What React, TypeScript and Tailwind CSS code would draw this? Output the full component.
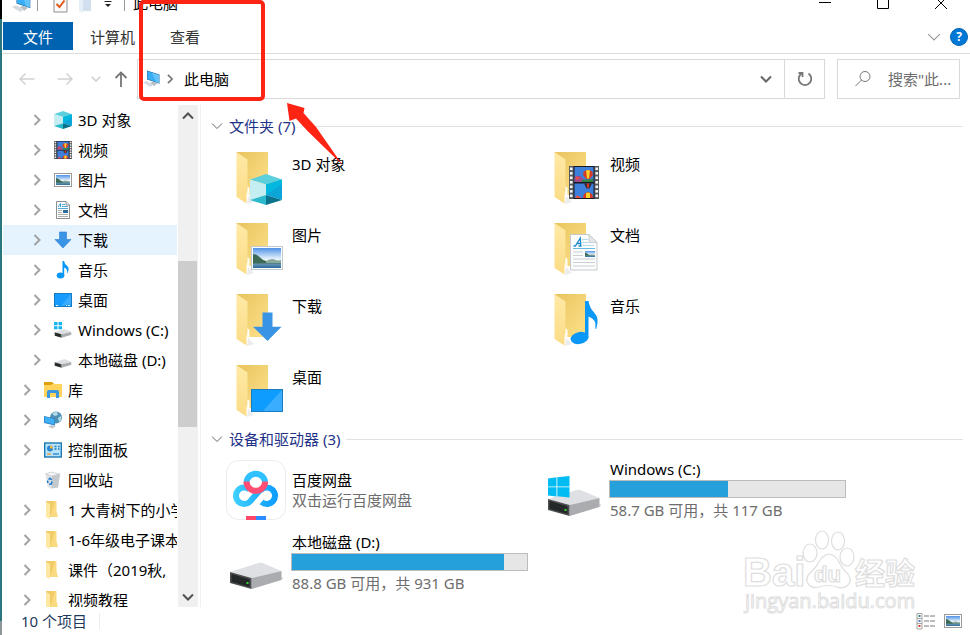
import type { ReactNode } from "react";

/* ---------- small icons (18px) ---------- */

function Scenery({ x, y, w, h }: { x: number; y: number; w: number; h: number }) {
  return (
    <svg x={x} y={y} width={w} height={h} viewBox="0 0 30 20" preserveAspectRatio="none">
      <defs>
        <linearGradient id="sky" x1="0" y1="0" x2="0" y2="1">
          <stop offset="0" stopColor="#4f93e6" />
          <stop offset="0.55" stopColor="#e8f3fc" />
        </linearGradient>
        <linearGradient id="lake" x1="0" y1="0" x2="0" y2="1">
          <stop offset="0" stopColor="#7fa9c6" />
          <stop offset="1" stopColor="#2f6a97" />
        </linearGradient>
      </defs>
      <rect width="30" height="20" fill="url(#sky)" />
      <rect y="14" width="30" height="6" fill="url(#lake)" />
      <path d="M0 6q4 0 7 3t7 4t16 1.500v1H0z" fill="#3d6b57" />
      <path d="M14 13q6-3 9-1.500t7 .5v3H14z" fill="#8aa79b" />
    </svg>
  );
}

function Balloons({ x, y, w, h }: { x: number; y: number; w: number; h: number }) {
  return (
    <svg x={x} y={y} width={w} height={h} viewBox="0 0 30 33" preserveAspectRatio="none">
      <rect width="30" height="33" fill="#55585c" />
      {[1.5, 6, 10.5, 15, 19.5, 24, 28.5].map((v) => (
        <g key={v} fill="#f3f3f3">
          <rect x="1" y={v} width="2.600" height="2.600" />
          <rect x="26.400" y={v} width="2.600" height="2.600" />
        </g>
      ))}
      <rect x="4.600" width="20.800" height="33" fill="#16191d" />
      <rect x="5.500" y="1" width="19" height="15" fill="#3f7fdc" />
      <rect x="5.500" y="17.500" width="19" height="14.500" fill="#3f7fdc" />
      <path d="M5.500 12q4-5 9 1v3h-9z" fill="#a04a8c" />
      <path d="M6 10l5 2-3 2z" fill="#ef4d3f" />
      <path d="M13 14l11-1v3H13z" fill="#31833d" />
      <path d="M14 8.500a5 4.500 0 0 1 10 0q-1 2-3.500 4.500h-3q-2.500-2.500-3.500-4.500z" fill="#d93a25" />
      <path d="M17 4.500q2-1 4 0l-1 8h-2z" fill="#f8d22c" />
      <path d="M15 17.500h8l-2.500 5h-3z" fill="#3a2b35" />
      <path d="M18 17.500h2v4h-2z" fill="#d93a25" />
      <path d="M14 32q0-5 5-6q5 1 5 6z" fill="#d93a25" />
      <path d="M17 27q2-1 4 0v5h-4z" fill="#f8d22c" />
      <path d="M6 32q2-5 6 0z" fill="#ef4d3f" />
    </svg>
  );
}

function Cube({ x, y, w, h }: { x: number; y: number; w: number; h: number }) {
  return (
    <svg x={x} y={y} width={w} height={h} viewBox="0 0 32 31" preserveAspectRatio="none">
      <path d="M0 5.500L16 0l16 5.500L16 10.500z" fill="#5ccfdc" />
      <path d="M0 5.500l16 5v10.500L0 26z" fill="#c4eef1" />
      <path d="M32 5.500l-16 5v10.500l16 5z" fill="#0ba5d8" />
      <path d="M16 10.500l16-5v5L16 21z" fill="#04b7df" />
      <path d="M0 26l16-5v10z" fill="#2cb9cb" />
      <path d="M32 26l-16-5v10z" fill="#07738c" />
    </svg>
  );
}

function DiskBody() {
  return (
    <>
      <path d="M25 56l32-10v-2L27 52z" fill="#dedede" />
      <path d="M4 39l28.500-9q2-.5 4 0L55.500 38 25.500 45z" fill="#dfe0e3" />
      <path d="M55.500 38L25.500 45v11l30-9z" fill="#aaacaf" />
      <path d="M4 39l21.500 6v11L4 50z" fill="#4b4d4e" />
      <path d="M5.500 41l18 5.200v7.800l-18-5.200z" fill="#252828" />
      <rect x="20.500" y="49" width="2" height="2" fill="#34d52e" />
    </>
  );
}

function WinLogo() {
  return (
    <g fill="#00bcf2">
      <path d="M4 18.500l8.500-1.200v9.200H4z" />
      <path d="M13.300 17.200L25.500 16v10.500H13.300z" />
      <path d="M4 27.300h8.500v9.200L4 35.500z" />
      <path d="M13.300 27.300h12.200V37.500l-12.200-1.200z" />
    </g>
  );
}

function Glyph({ children, size = "size-[18px]" }: { children: ReactNode; size?: string }) {
  return (
    <svg className={`${size} shrink-0`} viewBox="0 0 18 18" aria-hidden="true">
      {children}
    </svg>
  );
}

const PcIcon = ({ size }: { size?: string }) => (
  <Glyph size={size}>
    <path d="M4 .5l12.500 4v9.300L4 9.500z" fill="#2b6fa0" />
    <path d="M4.500 1.200l11.500 3.800v8L4.500 9z" fill="#3aaef5" />
    <path d="M9 2.700l7 2.300v8l-3-1z" fill="#63c3fa" />
    <path d="M6.500 13.500l3-2 5 1.800-3.500 2.700z" fill="#b7bec4" />
    <path d="M0 12.500l3.500-1.500 7 3.500L7.500 17z" fill="#d4dae0" />
  </Glyph>
);
const CubeIcon = () => (
  <Glyph>
    <Cube x={0} y={0} w={18} h={18} />
  </Glyph>
);
const VideoIcon = () => (
  <Glyph>
    <Balloons x={0} y={0} w={18} h={18} />
  </Glyph>
);
const PictureIcon = () => (
  <Glyph>
    <rect x=".5" y="2.500" width="17" height="13" fill="#fff" stroke="#9a9a9a" />
    <Scenery x={2} y={4} w={14} h={10} />
  </Glyph>
);
const DocIcon = () => (
  <Glyph>
    <path d="M2.500.5h9.500l3.500 3.500v13.500h-13z" fill="#fff" stroke="#8b8f92" />
    <path d="M12 .5v3.500h3.500" fill="#eee" stroke="#8b8f92" />
    <path d="M4 6l2.500-3.500V6" stroke="#2a93d1" strokeWidth=".9" fill="none" />
    <path d="M8 3.500h3M8 5.500h6M4 7.500h10" stroke="#2a93d1" strokeWidth=".8" fill="none" />
    <path d="M4 9.500h4M4 11.500h4M4 13.500h10M4 15.500h10" stroke="#9a9a9a" strokeWidth=".8" />
    <rect x="9" y="9" width="5" height="3" fill="#2c6c9f" />
  </Glyph>
);
const DownIcon = () => (
  <Glyph>
    <path d="M5.500 1h7v7.500H17L9 17 1 8.500h4.500z" fill="#3a95e6" stroke="#2b7cd0" strokeWidth=".6" />
  </Glyph>
);
const MusicIcon = () => (
  <Glyph>
    <ellipse cx="6.500" cy="14.500" rx="3.800" ry="3" fill="#0797f5" />
    <path d="M8.500 0H10q.5 3 3.200 5t.3 7q-.2.700-.6 0q1.200-4-2.700-5.500V15H8.500z" fill="#0797f5" />
  </Glyph>
);
const DesktopIcon = () => (
  <Glyph>
    <rect x=".5" y="2.500" width="17" height="13" fill="#169cfd" stroke="#167cc4" />
    <path d="M17 3v10L7 15z" fill="#3babfd" />
    <path d="M2 14.500h2M12 14.500h1M14 14.500h2" stroke="#e8f6ff" />
  </Glyph>
);
const DriveIcon = ({ windows = false }: { windows?: boolean }) => (
  <svg className="size-[18px] shrink-0" viewBox="2 4 56 56" aria-hidden="true">
    <DiskBody />
    {windows && (
      <g fill="#12b4ee">
        <path d="M2 7h11v10H2zM16 7h11v10H16zM2 20h11v10H2zM16 20h11v10H16z" />
      </g>
    )}
  </svg>
);
const LibraryIcon = () => (
  <Glyph>
    <path d="M0 1h8l2 2h8v13H0z" fill="#ffd35c" />
    <path d="M0 1h8l2 2H8L7 4H0z" fill="#dfa010" />
    <path d="M3 17v-6q0-2 2-2h8q2 0 2 2v6h-3v-5H6v5z" fill="#3d97dc" />
  </Glyph>
);
const NetworkIcon = () => (
  <Glyph>
    <circle cx="12" cy="6.500" r="6" fill="#4e91b5" />
    <path d="M8 3q2-2.500 5-2l1 3-3 1zM14 7l3-2q1 4-2 6z" fill="#b4dbe8" />
    <path d="M0 5l11 2.500v7L0 12z" fill="#2d7fc0" />
    <path d="M.7 5.800l9.600 2.300v5.500L.7 11.300z" fill="#3fb0f8" />
    <path d="M4 15.500l4-1.500 4 1.500-4 2z" fill="#c3c9ce" />
  </Glyph>
);
const ControlIcon = () => (
  <Glyph>
    <rect x=".7" y="2" width="16.600" height="14" fill="#b8e4fb" stroke="#1b78b4" strokeWidth="1.400" />
    <circle cx="6" cy="7.500" r="3" fill="#2787d4" />
    <path d="M6 7.500v-3a3 3 0 0 1 3 3z" fill="#f6b53c" />
    <path d="M10.500 5.500h2M10.500 8h2M14 5.500h1.500M14 8h1.500" stroke="#1b78b4" strokeWidth="1.300" />
    <path d="M3 13h4" stroke="#f0982b" strokeWidth="1.300" />
    <path d="M9 13h6" stroke="#1f7fca" strokeWidth="1.300" />
  </Glyph>
);
const RecycleIcon = () => (
  <Glyph>
    <path d="M1.500 3l5-2 9.500 2-2 13.500-7 1-3.500-2z" fill="#dfe2e5" />
    <path d="M1.500 3l6 2 8.500-2-9-2z" fill="#f4f5f6" stroke="#b6babd" strokeWidth=".5" />
    <path d="M8 5l8-2-2 13.500-6.500 1z" fill="#c3c8cc" />
    <path d="M4.500 8.500l1.500-1.300 1.700 1.800M8 10.500l-.8 2.500-2 .2M3.800 12l-.2-2.500" fill="none" stroke="#1479cf" strokeWidth="1.500" />
  </Glyph>
);
const FolderIcon = () => (
  <Glyph>
    <path d="M2 0h9.500v16H2z" fill="#f0cc67" />
    <path d="M11 0h1.500v10l1.500 6H6z" fill="#fada80" />
    <path d="M2 1l4 2v15l-4-2z" fill="#ffe9a2" />
  </Glyph>
);

/* ---------- large icons (60px) ---------- */

function BigFolder({ children }: { children: ReactNode }) {
  return (
    <svg className="size-[60px] shrink-0" viewBox="0 0 60 60" aria-hidden="true">
      <defs>
        <linearGradient id="back" x1="0" y1="0" x2="1" y2="1">
          <stop offset="0" stopColor="#e8c45e" />
          <stop offset="1" stopColor="#fde18b" />
        </linearGradient>
        <linearGradient id="flap" x1="0" y1="0" x2="0" y2="1">
          <stop offset="0" stopColor="#ffe9a6" />
          <stop offset="1" stopColor="#fbdc86" />
        </linearGradient>
      </defs>
      <path d="M21 56l7-2-6-6z" fill="#ececec" />
      <path d="M10.500 4h31.500v43H21z" fill="url(#back)" />
      <path d="M10.500 4l11 7.500V36l-1 5v14.500L10.500 49z" fill="url(#flap)" />
      <path d="M21.500 38l2 2v8h-2.500z" fill="#fffdf5" />
      {children}
    </svg>
  );
}

const CubeFolder = () => (
  <BigFolder>
    <Cube x={24} y={26} w={32} h={31} />
  </BigFolder>
);
const VideoFolder = () => (
  <BigFolder>
    <Balloons x={25} y={18} w={30} h={33} />
  </BigFolder>
);
const PictureFolder = () => (
  <BigFolder>
    <rect x="25.500" y="27.500" width="31" height="23" fill="#fafcfd" stroke="#c3ccd3" />
    <Scenery x={27} y={29} w={28} h={20} />
  </BigFolder>
);
const DocFolder = () => (
  <BigFolder>
    <path d="M26.500 15.500h18.500l8 8v27.500h-26.500z" fill="#fbfcfc" stroke="#c5c9cb" />
    <path d="M45 15.500v8h8z" fill="#e3e6e8" stroke="#c5c9cb" strokeWidth=".8" />
    <path d="M29.500 27h1.800l5-8 .5 8h-2.300M32.500 24.500h4" fill="none" stroke="#1d8acb" strokeWidth="1.300" />
    <path d="M38 20.500h6M38 23.500h6M38 26.500h12" stroke="#b9dced" />
    <path d="M29 29.500h22" stroke="#6db8df" />
    <path d="M29 33h10M29 36.500h10M29 40h22M29 43.500h22M29 47h22" stroke="#ccd0d3" />
    <Scenery x={41} y={32} w={10} h={6} />
  </BigFolder>
);
const DownFolder = () => (
  <BigFolder>
    <path d="M36.500 22.500h10v14.200h9L41.500 51 27 36.700h9.500z" fill="#3a94e5" />
  </BigFolder>
);
const MusicFolder = () => (
  <BigFolder>
    <ellipse cx="35.500" cy="48" rx="9" ry="6" transform="rotate(-12 35.500 48)" fill="#0b97f6" />
    <path d="M41 11h3.500q1 7 6 12t2 15q-.6 1.500-1.200.5q2-9-6.800-12V48H41z" fill="#0b97f6" />
  </BigFolder>
);
const DesktopFolder = () => (
  <BigFolder>
    <rect x="25.500" y="28.500" width="31" height="22" fill="#0f9cff" stroke="#1a7cc2" />
    <path d="M56 29v21H37z" fill="#3aaefc" />
  </BigFolder>
);

const BigDrive = ({ windows = false }: { windows?: boolean }) => (
  <svg className="size-[60px] shrink-0" viewBox="0 0 60 60" aria-hidden="true">
    <DiskBody />
    {windows && <WinLogo />}
  </svg>
);

const NetdiskLogo = () => (
  <svg className="size-[60px] shrink-0" viewBox="0 0 60 60" aria-hidden="true">
    <defs>
      <linearGradient id="cloud" x1="8" y1="0" x2="52" y2="0" gradientUnits="userSpaceOnUse">
        <stop offset="0" stopColor="#3fd0ff" />
        <stop offset="1" stopColor="#0a9bff" />
      </linearGradient>
    </defs>
    <rect x=".5" y=".5" width="59" height="59" rx="12" fill="#fff" stroke="#ececee" />
    <g fill="none" strokeWidth="6">
      <path d="M34 30L24 41.500a8.200 8.200 0 1 1-.5-12M34.500 30.500a8.200 8.200 0 1 1 1 11.500" stroke="url(#cloud)" />
      <path d="M20.500 23a9.300 9.300 0 0 1 18.600 0" stroke="#2fc0ff" />
      <path d="M20.500 21.500a9.300 9.300 0 0 0 18.600 0" stroke="#ff4d73" />
    </g>
    <path d="M20 56h10v4H20z" fill="#ff4769" />
    <path d="M30 56h10v4H30z" fill="#2a8cff" />
  </svg>
);

/* ---------- line glyphs ---------- */

function Chevron({ dir, className }: { dir: "down" | "right" | "up"; className: string }) {
  const path = { down: "M1 3.500l5 5 5-5", up: "M1 8.500l5-5 5 5", right: "M3.500 1l5 5-5 5" }[dir];
  return (
    <svg className={`shrink-0 ${className}`} viewBox="0 0 12 12" fill="none" stroke="currentColor" aria-hidden="true">
      <path d={path} />
    </svg>
  );
}

/* ---------- data ---------- */

type Node = { label: string; icon: ReactNode; top?: boolean; leaf?: boolean; active?: boolean };

const tree: Node[] = [
  { label: "3D 对象", icon: <CubeIcon /> },
  { label: "视频", icon: <VideoIcon /> },
  { label: "图片", icon: <PictureIcon /> },
  { label: "文档", icon: <DocIcon /> },
  { label: "下载", icon: <DownIcon />, active: true },
  { label: "音乐", icon: <MusicIcon /> },
  { label: "桌面", icon: <DesktopIcon /> },
  { label: "Windows (C:)", icon: <DriveIcon windows /> },
  { label: "本地磁盘 (D:)", icon: <DriveIcon /> },
  { label: "库", icon: <LibraryIcon />, top: true },
  { label: "网络", icon: <NetworkIcon />, top: true },
  { label: "控制面板", icon: <ControlIcon />, top: true },
  { label: "回收站", icon: <RecycleIcon />, top: true, leaf: true },
  { label: "1 大青树下的小学", icon: <FolderIcon />, top: true },
  { label: "1-6年级电子课本", icon: <FolderIcon />, top: true },
  { label: "课件（2019秋,", icon: <FolderIcon />, top: true },
  { label: "视频教程", icon: <FolderIcon />, top: true },
];

const folders = [
  { label: "3D 对象", icon: <CubeFolder /> },
  { label: "视频", icon: <VideoFolder /> },
  { label: "图片", icon: <PictureFolder /> },
  { label: "文档", icon: <DocFolder /> },
  { label: "下载", icon: <DownFolder /> },
  { label: "音乐", icon: <MusicFolder /> },
  { label: "桌面", icon: <DesktopFolder /> },
];

/* ---------- parts ---------- */

function TitleBar() {
  return (
    <header className="overflow-hidden">
      <div className="-mt-3 flex h-[30px] items-center pl-[9px]">
        <PcIcon size="size-5" />
        <span className="ml-[5px] h-4 w-px bg-[#9a9a9a]" />
        <button aria-label="属性" className="ml-[15px]">
          <svg className="h-5 w-[15px]" viewBox="0 0 15 20" fill="none">
            <path d="M1 1h13v18H1z" fill="#fafafa" stroke="#8f8f8f" />
            <path d="M3.500 11l3 3 5-6.500" stroke="#e2591b" strokeWidth="2" />
          </svg>
        </button>
        <button aria-label="新建文件夹" className="ml-[11px]">
          <svg className="h-5 w-3" viewBox="0 0 12 20">
            <path d="M3 1h9v17H3z" fill="#d2dfee" />
            <path d="M0 2l4 2v16l-4-2z" fill="#e6eef7" />
          </svg>
        </button>
        <button aria-label="自定义快速访问工具栏" className="ml-[12px]">
          <svg className="size-2.5" viewBox="0 0 10 10">
            <path d="M1.500 3.500h7" stroke="#222" />
            <path d="M2 6h6L5 9z" fill="#222" />
          </svg>
        </button>
        <span className="ml-[11px] h-4 w-px bg-[#9a9a9a]" />
        <h1 className="ml-2">此电脑</h1>
        <div className="ml-auto flex">
          <button aria-label="最小化" className="flex w-[58px] justify-center">
            <svg className="size-[14px]" viewBox="0 0 14 14" stroke="#000"><path d="M1 6.500h12" /></svg>
          </button>
          <button aria-label="最大化" className="flex w-[58px] justify-center">
            <svg className="size-[14px]" viewBox="0 0 14 14" fill="none" stroke="#000"><path d="M1.500 1.500h11v11h-11z" /></svg>
          </button>
          <button aria-label="关闭" className="flex w-[58px] justify-center">
            <svg className="size-[14px]" viewBox="0 0 14 14" stroke="#000"><path d="M1 1l12 12M13 1L1 13" /></svg>
          </button>
        </div>
      </div>
    </header>
  );
}

function Ribbon() {
  return (
    <nav className="flex items-center border-b border-[#dadbdc] pt-1 pb-[3px] text-[#333]">
      <button className="h-7 w-[70px] bg-[#0063b1] pt-px text-white">文件</button>
      <button className="h-7 w-[79px] pt-px">计算机</button>
      <button className="h-7 w-[66px] pt-px">查看</button>
      <button aria-label="展开功能区" className="ml-auto pt-[2px] text-[#9a9a9a]">
        <Chevron dir="down" className="size-[14px]" />
      </button>
      <button aria-label="帮助" className="mt-[2px] mr-[2px] ml-[9px] size-[18px] rounded-full border border-[#0063b1] bg-[#0078d7] text-xs leading-4 font-bold text-white">
        ?
      </button>
    </nav>
  );
}

function AddressRow() {
  return (
    <div className="flex items-center py-[5px] pr-[10px] pl-4">
      <button aria-label="后退" className="text-[#d2d2d2]">
        <svg className="size-4" viewBox="0 0 16 16" fill="none" stroke="currentColor" strokeWidth="1.500"><path d="M15.500 8H1M6.500 2.500L1 8l5.500 5.500" /></svg>
      </button>
      <button aria-label="前进" className="ml-[22px] text-[#d2d2d2]">
        <svg className="size-4" viewBox="0 0 16 16" fill="none" stroke="currentColor" strokeWidth="1.500"><path d="M.5 8H15M9.500 2.500L15 8l-5.500 5.500" /></svg>
      </button>
      <button aria-label="最近浏览的位置" className="ml-[18px] text-[#d2d2d2]">
        <Chevron dir="down" className="size-[10px] stroke-2" />
      </button>
      <button aria-label="上移" className="mr-2 ml-3 text-[#757575]">
        <svg className="size-4" viewBox="0 0 16 16" fill="none" stroke="currentColor" strokeWidth="1.800"><path d="M8 16V1.500M2.500 7L8 1.500 13.500 7" /></svg>
      </button>
      <div className="flex h-10 min-w-0 flex-1 items-center border border-[#d9d9d9]">
        <span className="ml-[5px] flex"><PcIcon /></span>
        <Chevron dir="right" className="mr-2 ml-1 size-[10px] stroke-2 text-[#777]" />
        <button className="ml-px">此电脑</button>
        <button aria-label="历史记录" className="mr-3 ml-auto text-[#666]">
          <Chevron dir="down" className="size-3 stroke-2" />
        </button>
        <button aria-label="刷新" className="flex h-full w-10 items-center justify-center border-l border-[#d9d9d9] text-[#777]">
          <svg className="size-[18px]" viewBox="0 0 18 18" fill="none" stroke="currentColor" strokeWidth="1.800">
            <path d="M12.500 3.500a6.300 6.300 0 1 1-7 0" />
            <path d="M2.500 3h4v4" />
          </svg>
        </button>
      </div>
      <label className="ml-3 flex h-10 w-[123px] items-center border border-[#d9d9d9]">
        <svg className="ml-4 size-[18px] shrink-0" viewBox="0 0 18 18" fill="none" stroke="#777" aria-label="搜索">
          <circle cx="11" cy="6.500" r="5" />
          <path d="M7.500 10L1.500 16" />
        </svg>
        <input type="text" placeholder={'搜索"此...'} className="ml-4 w-full min-w-0 outline-none placeholder:text-[#6d6d6d]" />
      </label>
    </div>
  );
}

function Sidebar() {
  return (
    <aside className="flex w-[195px] shrink-0">
      <ul className="min-w-0 flex-1 overflow-hidden">
        {tree.map((n) => (
          <li key={n.label} className={n.active ? "mr-px bg-[#e5f3ff]" : "mr-px"}>
            <button className={`flex h-[30px] w-full items-center overflow-hidden whitespace-nowrap ${n.top ? "pl-[18px]" : "pl-7"}`}>
              <Chevron dir="right" className={n.leaf ? "invisible size-3" : "size-3 stroke-2 text-[#a2a2a2]"} />
              <span className="mr-[6px] ml-[11px] flex shrink-0">{n.icon}</span>
              {n.label}
            </button>
          </li>
        ))}
      </ul>
      <div className="flex w-5 flex-col items-center bg-[#f0f0f0]">
        <button aria-label="向上滚动" className="pt-[5px] text-[#505050]">
          <Chevron dir="up" className="size-3 stroke-2" />
        </button>
        <div className="mt-[139px] h-[166px] w-full border-r border-[#f0f0f0] bg-[#cdcdcd] bg-clip-padding" />
        <button aria-label="向下滚动" className="mt-auto pb-1 text-[#505050]">
          <Chevron dir="down" className="size-3 stroke-2" />
        </button>
      </div>
    </aside>
  );
}

function GroupHeader({ children }: { children: ReactNode }) {
  return (
    <h2 className="flex h-5 items-center gap-[6px] text-[#1e3287]">
      <Chevron dir="down" className="size-3 text-[#666]" />
      {children}
      <span className="h-px flex-1 bg-[#e2e2e2]" />
    </h2>
  );
}

function Drive({ name, used, note, windows }: { name: string; used: number; note: string; windows?: boolean }) {
  return (
    <li className="flex h-[65px] items-center gap-[5px]">
      <BigDrive windows={windows} />
      <div className="w-[237px]">
        <p className="pl-px leading-5">{name}</p>
        <div role="meter" aria-label={name} aria-valuenow={used} aria-valuemin={0} aria-valuemax={100} className="mt-px h-[18px] border border-[#bcbcbc] bg-[#e6e6e6]">
          <div className="h-full bg-[#26a0da]" style={{ width: `${used}%` }} />
        </div>
        <p className="mt-[2px] pl-px leading-5 text-[#6d6d6d]">{note}</p>
      </div>
    </li>
  );
}

function Content() {
  return (
    <main className="ml-[2px] min-w-0 flex-1 border-l border-[#f0f0f0] pt-[11px] pr-[7px] pl-[10px]">
      <GroupHeader>文件夹 (7)</GroupHeader>
      <ul className="grid grid-cols-[repeat(auto-fill,318px)] pt-[9px] pl-[15px]">
        {folders.map((f) => (
          <li key={f.label} className="flex h-[71px] items-start gap-[6px] pt-[3px]">
            {f.icon}
            <span className="pt-[6px] leading-5">{f.label}</span>
          </li>
        ))}
      </ul>
      <GroupHeader>设备和驱动器 (3)</GroupHeader>
      <ul className="grid grid-cols-[repeat(auto-fill,318px)] gap-y-2 pt-2 pl-[15px]">
        <li className="flex h-[65px] items-center gap-[6px]">
          <NetdiskLogo />
          <div>
            <p className="leading-5">百度网盘</p>
            <p className="leading-5 text-[#6d6d6d]">双击运行百度网盘</p>
          </div>
        </li>
        <Drive name="Windows (C:)" used={50} note="58.7 GB 可用，共 117 GB" windows />
        <Drive name="本地磁盘 (D:)" used={90} note="88.8 GB 可用，共 931 GB" />
      </ul>
    </main>
  );
}

function StatusBar() {
  return (
    <footer className="flex h-7 shrink-0 items-center pr-2 pl-[18px] text-[#1e395b]">
      <span>10 个项目</span>
      <span className="ml-3 h-4 w-px bg-[#ececec]" />
      <button aria-label="详细信息" className="ml-auto">
        <svg className="h-[17px] w-[19px]" viewBox="0 0 19 17" fill="none">
          <path d="M1 .5h5v15.500H1zM1 5.500h5M1 10.500h5" stroke="#a5a5a5" />
          <path d="M8 3h5M14 3h5M8 8h5M14 8h5M8 13h5M14 13h5" stroke="#7a7a7a" />
          <path d="M2.500 2h2v2h-2z" fill="#3f7f8c" />
          <path d="M2.500 7h2v2h-2z" fill="#5a76c8" />
          <path d="M2.500 12h2v2h-2z" fill="#d63a26" />
        </svg>
      </button>
      <button aria-label="大图标" className="ml-[9px]">
        <PictureIcon />
      </button>
    </footer>
  );
}

function Watermark() {
  return (
    <svg className="pointer-events-none absolute right-[50px] bottom-4 h-[90px] w-[180px] overflow-visible" viewBox="0 0 180 90" fill="#fff" stroke="#dedede" strokeWidth="1.200" aria-hidden="true">
      <text x="3" y="57" fontSize="40" fontWeight="700" className="font-['Liberation_Sans',sans-serif]">Bai</text>
      <ellipse cx="70" cy="24" rx="7" ry="9" />
      <ellipse cx="82" cy="11" rx="6.500" ry="9" />
      <ellipse cx="98" cy="12" rx="6.500" ry="9" />
      <ellipse cx="107" cy="28" rx="7" ry="9" />
      <path d="M88 25q7 0 11 8t9 12q5 7-1 12q-5 3-10 1q-9-3-18 0q-6 2-10-2q-5-6 1-12q6-5 9-11t9-8z" />
      <text x="74" y="53" fontSize="22" fontWeight="700" className="font-['Liberation_Sans',sans-serif]">du</text>
      <text x="115" y="55" fontSize="30" fontWeight="700" className="font-['Noto_Sans_CJK_SC',sans-serif]">经验</text>
      <text x="5" y="79" fontSize="20" strokeWidth="1" className="font-['Open_Sans',sans-serif]">jingyan.baidu.com</text>
    </svg>
  );
}

export default function App() {
  return (
    <div className="relative flex h-screen overflow-hidden bg-white font-['Noto_Sans','Noto_Sans_CJK_SC',sans-serif] text-[15px] leading-5 text-black">
      <div className="flex w-[2px] shrink-0 flex-col bg-[#2b7780]">
        <div className="h-[19px] bg-black" />
        <div className="mt-auto h-[14px] bg-[#8d9596]" />
      </div>
      <div className="ml-px flex min-w-0 flex-1 flex-col">
        <TitleBar />
        <Ribbon />
        <AddressRow />
        <div className="mt-px flex min-h-0 flex-1">
          <Sidebar />
          <Content />
        </div>
        <StatusBar />
      </div>
      <Watermark />
      <div className="absolute top-0 left-[139px] h-[101px] w-[126px] rounded-[5px] border-4 border-[#fe2414]" />
      <svg className="absolute top-[102px] left-[285px] h-[68px] w-[60px]" viewBox="0 0 60 68" aria-hidden="true">
        <path d="M2 1L19.500 6l-1 5L31 25l26.500 38L23 29.500 11 16.500 4.500 19z" fill="#fe2414" />
      </svg>
    </div>
  );
}
